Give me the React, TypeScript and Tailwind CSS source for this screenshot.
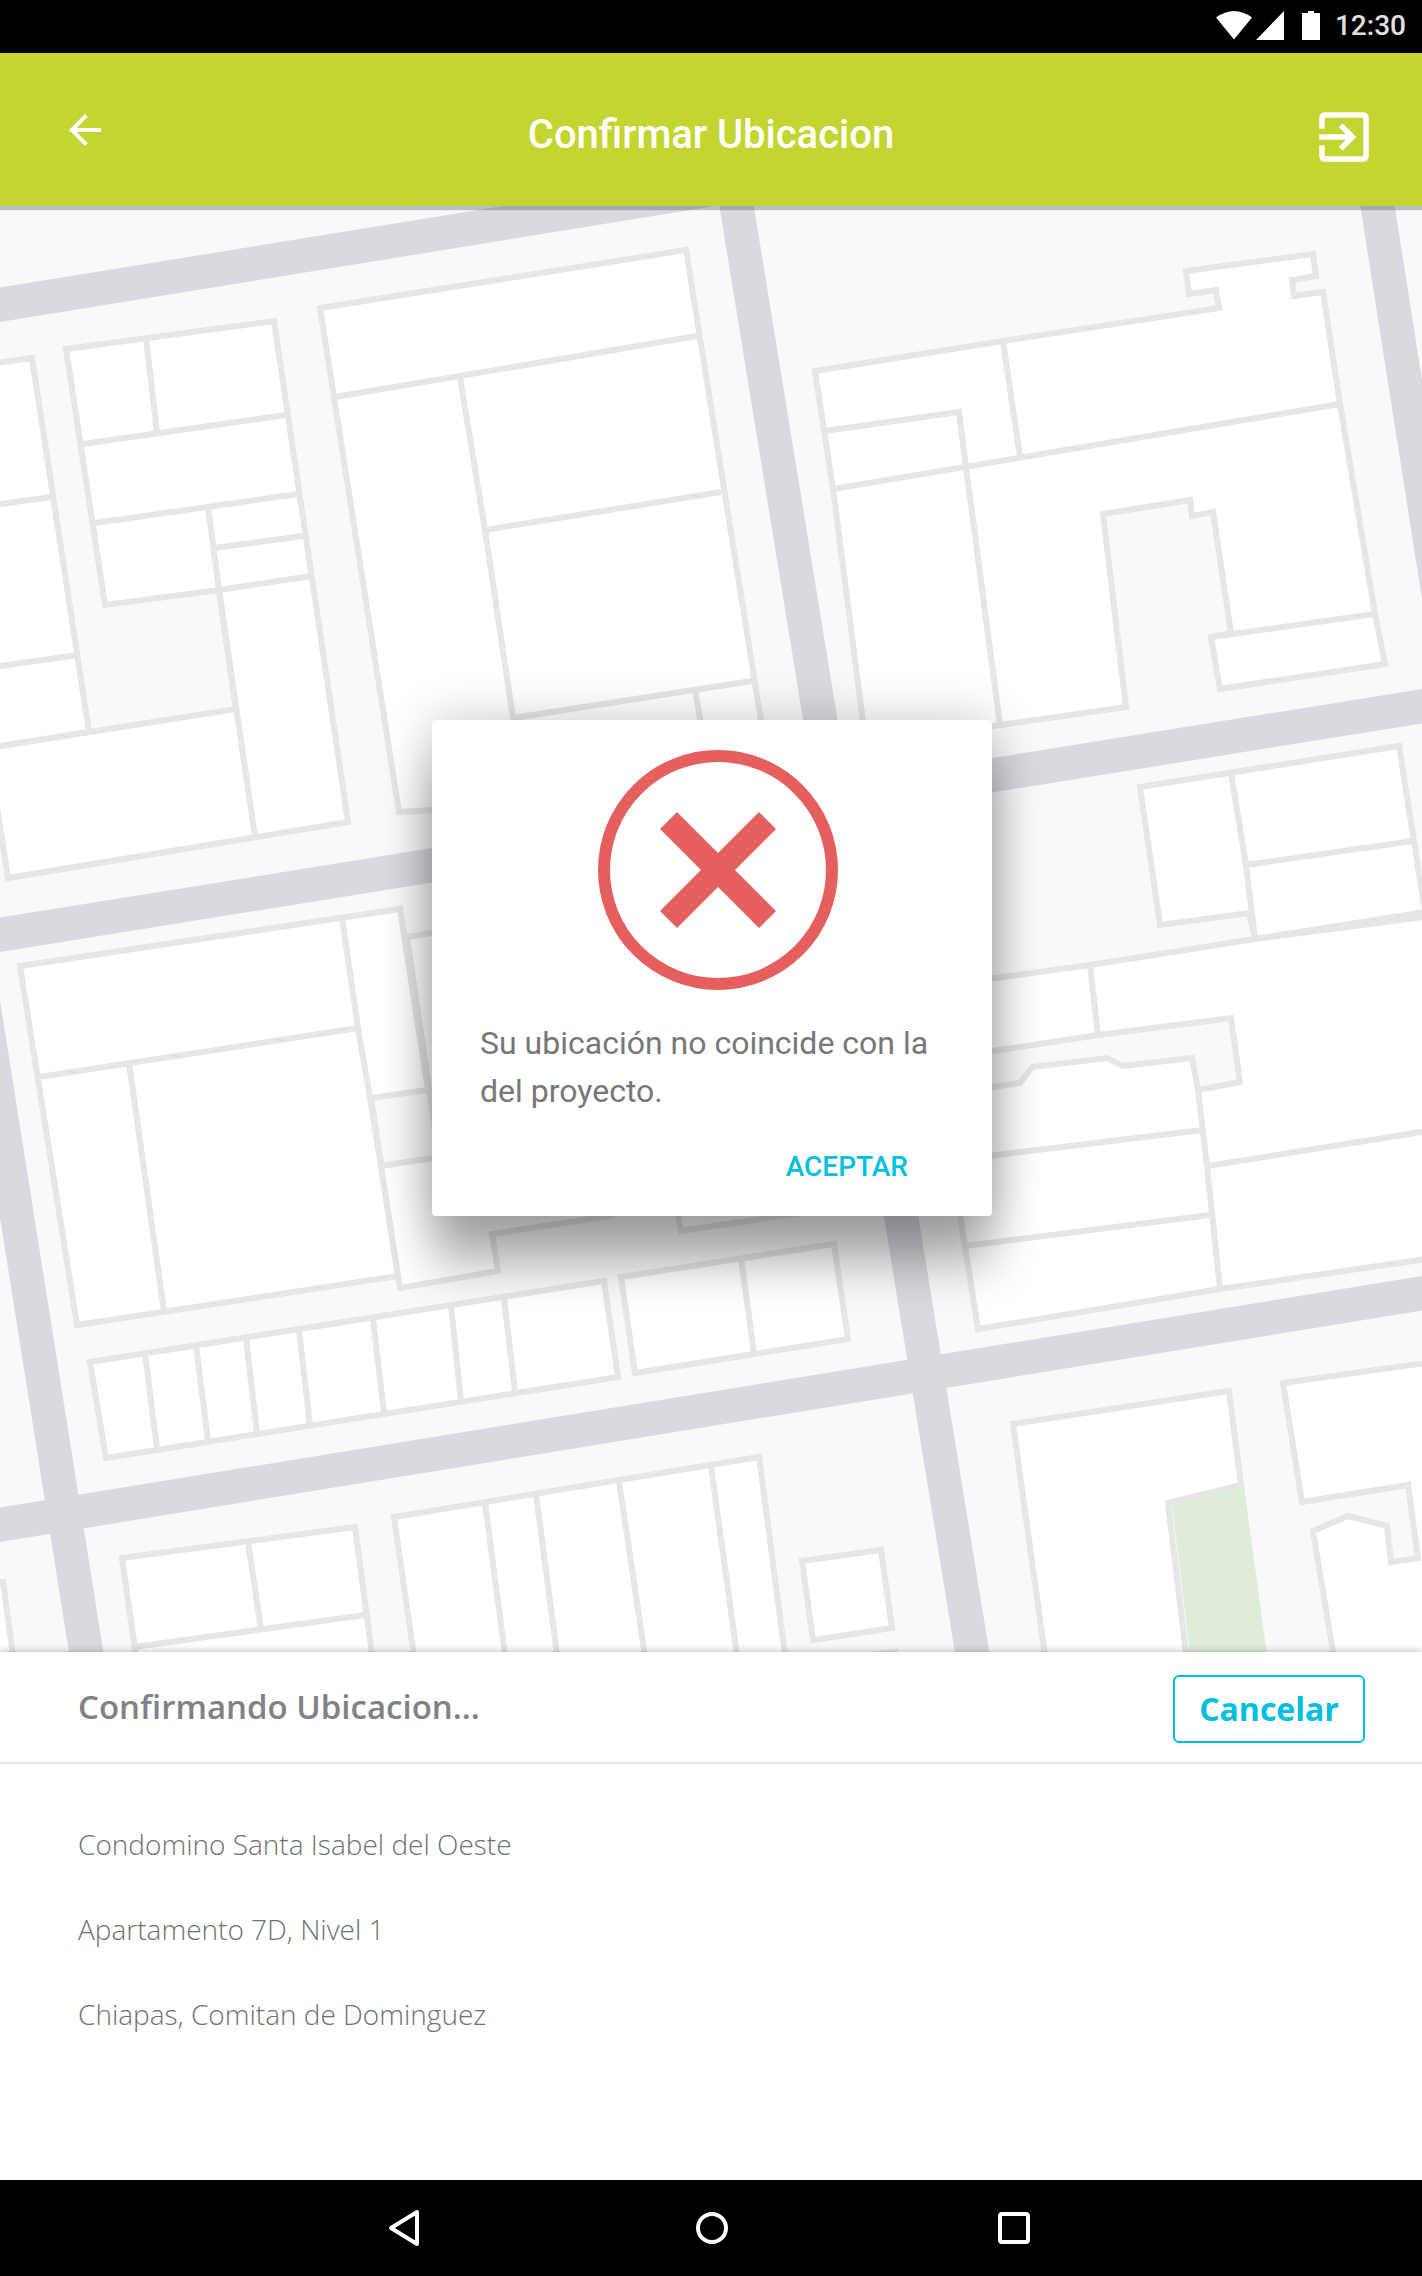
import React from "react";

const buildings = [
  "-10,364 32,358 89,732 -10,748",
  "66,349 274,321 348,822 8,878 -12,748 236,709 219,590 105,605",
  "320,308 686,250 772,790 399,812",
  "815,371 1003,341 1219,308 1216,290 1189,294 1186,271 1313,254 1316,276 1292,280 1294,296 1323,292 1340,404 1375,614 1385,664 1220,689 1211,637 1231,633 1213,512 1192,516 1190,500 1103,514 1126,707 1000,725 866,745 833,489",
  "1140,787 1399,746 1425,912 1255,939 1249,913 1160,925",
  "930,987 1090,965 1255,939 1440,915 1440,1257 1220,1289 978,1329 945,1120",
  "1013,1424 1229,1391 1241,1485 1168,1503 1188,1670 1047,1670",
  "1283,1383 1440,1361 1440,1670 1336,1670 1313,1531 1348,1516 1387,1526 1391,1562 1418,1558 1408,1485 1302,1502",
  "20,966 400,909 428,1090 371,1098 398,1276 77,1325",
  "381,1166 600,1132 610,1216 492,1234 498,1271 400,1288",
  "407,937 500,922 520,1140 438,1150",
  "670,1170 770,1160 800,1213 681,1231",
  "90,1362 604,1281 618,1377 106,1458",
  "621,1277 834,1244 848,1339 635,1373",
  "122,1558 355,1527 374,1670 138,1670",
  "394,1517 759,1457 787,1670 416,1670",
  "802,1561 881,1550 892,1628 813,1640",
  "-20,1586 3,1582 15,1670 -20,1670",
];

const walls = [
  "0,504 52,497",
  "0,666 77,655",
  "82,444 286,415",
  "95,523 298,494",
  "146,338 157,433",
  "208,507 219,590 311,576",
  "214,548 303,536",
  "219,590 255,837",
  "335,397 697,336",
  "460,377 485,530 513,718 752,681",
  "485,530 721,492",
  "695,690 702,730",
  "825,431 959,412 966,467 1000,725",
  "833,489 1340,404",
  "1003,341 1020,457",
  "1211,637 1375,614",
  "1231,773 1246,865 1255,939",
  "1246,865 1413,841",
  "1090,965 1098,1035",
  "965,1246 1210,1215",
  "980,1157 1202,1130",
  "1207,1166 1440,1129",
  "1198,1090 1207,1166 1220,1289",
  "39,1077 358,1028",
  "342,917 358,1028 370,1098 381,1166",
  "129,1063 164,1311",
  "145,1353 157,1449",
  "196,1345 208,1441",
  "246,1338 257,1433",
  "299,1330 310,1425",
  "373,1319 384,1413",
  "451,1306 461,1401",
  "504,1298 515,1392",
  "741,1258 754,1353",
  "134,1647 365,1615",
  "248,1542 261,1629",
  "485,1503 507,1670",
  "536,1494 559,1670",
  "619,1481 647,1670",
  "711,1466 739,1670",
  "860,1656 898,1652",
];

const roads = [
  "-20,308 720,188",
  "734,190 975,1670",
  "1375,190 1455,700",
  "-20,938 1442,703",
  "-20,1528 1442,1290",
  "-20,983 89,1670",
];

function StreetMap() {
  return (
    <svg
      className="absolute inset-0 size-full"
      viewBox="0 206 1422 1446"
      preserveAspectRatio="xMidYMid slice"
      aria-hidden="true"
    >
      <rect x="-1000" y="0" width="4000" height="2400" fill="#f9f9f9" />
      <g fill="#ffffff" stroke="#e6e6e8" strokeWidth="6">
        {buildings.map((p) => (
          <polygon key={p} points={p} />
        ))}
      </g>
      <polygon
        points="960,1056 1098,1035 1231,1018 1240,1082 1198,1090 1192,1058 1122,1066 1107,1058 1032,1067 1020,1083 960,1092"
        fill="#f9f9f9"
        stroke="#e6e6e8"
        strokeWidth="6"
      />
      <g fill="none" stroke="#e6e6e8" strokeWidth="6">
        {walls.map((p) => (
          <polyline key={p} points={p} />
        ))}
      </g>
      <polygon points="1172,1505 1244,1486 1269,1670 1192,1670" fill="#e1ebda" />
      <g fill="none" stroke="#dad9df" strokeWidth="34">
        {roads.map((p) => (
          <polyline key={p} points={p} />
        ))}
      </g>
    </svg>
  );
}

function StatusBar() {
  return (
    <div className="flex h-[53px] shrink-0 items-center justify-end bg-black pr-4 pb-0.5">
      <svg className="mr-[15px] h-[29px] w-[104px]" viewBox="0 0 104 29" fill="#fff" aria-hidden="true">
        <path d="M0 6.500Q18-6.500 36 6.500L18 28.500z" />
        <path d="M68 0v29H40z" />
        <path d="M86 2h6V0h6v2h6v27H86z" />
      </svg>
      <span className="text-[28px] leading-8 font-medium text-[#e0e0e0]">12:30</span>
    </div>
  );
}

function Header() {
  return (
    <header className="relative z-10 grid h-[153px] shrink-0 grid-cols-[1fr_auto_1fr] items-center bg-[#c3d530] pr-[45px] pl-[61px] shadow-[0_4px_1px_0_rgba(40,40,40,0.28)]">
      <button type="button" aria-label="Volver" className="justify-self-start">
        <svg className="size-12" viewBox="0 0 24 24" fill="#fff">
          <path d="M20 11H7.830l5.590-5.590L12 4l-8 8 8 8 1.410-1.410L7.830 13H20v-2z" />
        </svg>
      </button>
      <h1 className="pt-2.5 pr-4 text-[40px] leading-12 font-medium text-white">Confirmar Ubicacion</h1>
      <button type="button" aria-label="Salir" className="justify-self-end pt-3.5">
        <svg className="size-[66px]" viewBox="0 0 24 24" fill="#fff">
          <path d="M10.090 15.590L11.500 17l5-5-5-5-1.410 1.410L12.670 11H3v2h9.670l-2.580 2.590zM19 3H5c-1.110 0-2 .9-2 2v4h2V5h14v14H5v-4H3v4c0 1.100.89 2 2 2h14c1.100 0 2-.9 2-2V5c0-1.100-.9-2-2-2z" />
        </svg>
      </button>
    </header>
  );
}

function ErrorDialog() {
  return (
    <div
      role="alertdialog"
      aria-labelledby="dialog-message"
      className="relative w-[560px] rounded bg-white px-12 pt-[30px] pb-[21px] shadow-[0_48px_48px_rgba(0,0,0,0.3),0_0_48px_rgba(0,0,0,0.22)]"
    >
      <div className="flex justify-center pl-3">
        <svg className="size-60" viewBox="-120 -120 240 240" aria-hidden="true">
          <circle r="114" fill="none" stroke="#e65f5f" strokeWidth="12" />
          <path
            d="M-41-58L0-17 41-58 58-41 17 0 58 41 41 58 0 17-41 58-58 41-17 0-58-41z"
            fill="#e65f5f"
          />
        </svg>
      </div>
      <p id="dialog-message" className="mt-[29px] text-[32px] leading-12 text-[#777]">
        Su ubicación no coincide con la del proyecto.
      </p>
      <div className="mt-6 flex justify-end pr-5">
        <button type="button" className="px-4 py-3 text-[28px] leading-8 font-medium text-[#00bfe0]">
          ACEPTAR
        </button>
      </div>
    </div>
  );
}

const details = [
  "Condomino Santa Isabel del Oeste",
  "Apartamento 7D, Nivel 1",
  "Chiapas, Comitan de Dominguez",
];

function LocationSheet() {
  return (
    <section className="relative z-10 shrink-0 bg-white font-['Open_Sans',sans-serif] text-[#808285] shadow-[0_0_8px_rgba(0,0,0,0.3)]">
      <div className="flex h-28 items-center justify-between border-b-2 border-[#e6e6e8] pt-1 pr-[57px] pl-[78px]">
        <h2 className="pb-1 text-[33px] leading-12 font-semibold">Confirmando Ubicacion...</h2>
        <button
          type="button"
          className="h-[68px] w-48 rounded-md border-2 border-[#00bfe0] text-[32px] leading-10 font-bold text-[#00bfe0]"
        >
          Cancelar
        </button>
      </div>
      <ul className="flex h-[416px] flex-col gap-[45px] pt-[60px] pl-[78px] text-[28px] leading-10 font-light text-[#6f7174]">
        {details.map((line) => (
          <li key={line}>{line}</li>
        ))}
      </ul>
    </section>
  );
}

function NavBar() {
  return (
    <nav className="flex h-24 shrink-0 items-center justify-center bg-black">
      <button type="button" aria-label="Atrás" className="flex w-[304px] justify-center">
        <svg className="size-12" viewBox="0 0 48 48" fill="none" stroke="#fff" strokeWidth="4" strokeLinejoin="round">
          <path d="M34 8v32L8 24z" />
        </svg>
      </button>
      <button type="button" aria-label="Inicio" className="flex w-[304px] justify-center">
        <svg className="size-12" viewBox="0 0 48 48" fill="none" stroke="#fff" strokeWidth="4">
          <circle cx="25" cy="24" r="14" />
        </svg>
      </button>
      <button type="button" aria-label="Recientes" className="flex w-[304px] justify-center">
        <svg className="size-12" viewBox="0 0 48 48" fill="none" stroke="#fff" strokeWidth="4">
          <rect x="9" y="10" width="28" height="28" rx="2" />
        </svg>
      </button>
    </nav>
  );
}

export default function App() {
  return (
    <div className="flex min-h-screen flex-col bg-white font-[Roboto,sans-serif]">
      <StatusBar />
      <Header />
      <main className="relative flex flex-1 items-center justify-center overflow-hidden pt-[78px] pl-0.5">
        <StreetMap />
        <ErrorDialog />
      </main>
      <LocationSheet />
      <NavBar />
    </div>
  );
}
